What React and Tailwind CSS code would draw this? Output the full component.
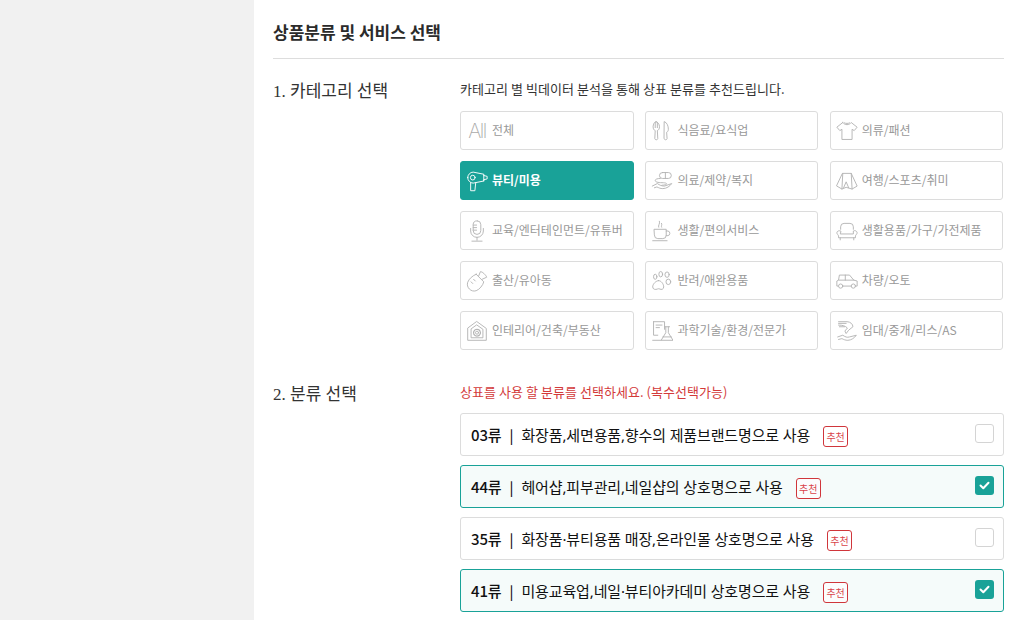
import React from 'react';

const sans = 'font-["Noto_Sans_CJK_KR","Noto_Sans",sans-serif]';

// line icons, 26x26 box
const icons = {
  fork: (
    <>
      <path d="M6 2c-2 0-3.500 3-3.500 6 0 2.500 1 4 2.500 4.500L4.500 22a1.800 1.800 0 0 0 3.500 0L7.500 12.500C9 12 10 10.500 10 8c0-3-2-6-4-6zM5 3v6M7.500 3v6" />
      <path d="M16 2c3 1 4.500 5 4.500 9 0 2-1 3-2 3.500L19 22a1.800 1.800 0 0 1-3.500 0z" />
    </>
  ),
  shirt: <path d="M8 3L1 8.500l3.500 4L7 11v12h12V11l2.500 1.500 3.500-4L18 3c-1 1.500-3 2.500-5 2.500S9 4.500 8 3zM10 3.500c1 .8 5 .8 6 0" />,
  dryer: (
    <>
      <path d="M2 9a6.500 6.500 0 0 1 6.500-6.500L21 5v1.500l4 1v3l-4 1V13L8.500 15.500A6.500 6.500 0 0 1 2 9z" />
      <circle cx="8" cy="9" r="2.800" />
      <path d="M5.500 15v9.500h5l1-9.500M21 6v7" />
    </>
  ),
  pill: (
    <>
      <rect x="10" y="3" width="14" height="7" rx="3.500" />
      <path d="M17 3v7M11 10c-4 0-6 1-6 2.500S8 15 13 15s5.500 1 5.500 1.500-2 1.500-5.500 1.500" />
      <path d="M1.500 19l6-3c3 2 5 3 8.500 3l8.500-3c-2 3-6 6-10.500 6-3 0-5-1-7-2l-3 1" />
    </>
  ),
  tent: (
    <>
      <path d="M8 4h10l7 15-6 3.500-7-2-5 2L1 19z" />
      <path d="M8 4L7 22.500M18 4l1 18.500M9 21l3-7 3 7" />
    </>
  ),
  mic: (
    <>
      <rect x="8.500" y="1" width="9" height="16" rx="4.500" />
      <path d="M5.500 10v3a7.500 7.500 0 0 0 15 0v-3M13 20.500V24M7 25h12M8.500 6h4M8.500 9h4M8.500 12h4" />
    </>
  ),
  cup: (
    <>
      <path d="M4 11h14v7a4 4 0 0 1-4 4H8a4 4 0 0 1-4-4zM18 13h2a2.800 2.800 0 0 1 0 5.500h-2M2 24.500h17" />
      <path d="M9 8.500c-1-2 2-4 1-7M12.500 8.500c-1-1.500 1-2.500 0-4.500" />
    </>
  ),
  sofa: (
    <>
      <path d="M5.500 11V8a4 4 0 0 1 4-4h7a4 4 0 0 1 4 4v3" />
      <path d="M5.500 13a3 3 0 0 0-4.500 2c0 2 2 2.500 2 4v2h20v-2c0-1.500 2-2 2-4a3 3 0 0 0-4.500-2v3.500h-15zM5 21v2.500M21 21v2.500" />
    </>
  ),
  bottle: (
    <>
      <path d="M12 5l9 9c-1 4-5 9-9 10.500-3 1-6 0-8-2s-3-5-2-8c1.500-4 6-8 10-9.500z" />
      <path d="M15 7l2-5c1 0 2.500.5 4 2s3 3 3.500 4.500l-5.500 2.500M9 11l2 2M6 14l2 2" />
    </>
  ),
  paw: (
    <>
      <path d="M9 12.500c3 0 6 4 6 7.500 0 3-3 3.500-4.500 2.500-1-.5-2-.5-3 0C5.500 23.500 2 23 2 20c0-3.500 4-7.500 7-7.500z" />
      <ellipse cx="5" cy="8" rx="2" ry="3" />
      <ellipse cx="11.500" cy="5" rx="2.200" ry="3.200" />
      <ellipse cx="19" cy="5.500" rx="2.500" ry="3.200" />
      <ellipse cx="20.500" cy="14" rx="2.800" ry="3.200" />
    </>
  ),
  car: (
    <>
      <path d="M2.500 19H1v-6l2-1 1-6h12l5 6 4 1v6h-1.500M8 19h10M3.500 12H21M11 6v6" />
      <circle cx="5.500" cy="19" r="2.500" />
      <circle cx="20.500" cy="19" r="2.500" />
    </>
  ),
  house: (
    <>
      <path d="M13 2l11 8v14H2V10z" />
      <path d="M13 6l7 5v10H6V11z" />
      <circle cx="13" cy="15" r="1.800" />
      <circle cx="13" cy="15" r="4" strokeDasharray="2 1" strokeWidth="1.500" />
    </>
  ),
  lab: (
    <>
      <path d="M3 2h13v9M3 2v16h5M6 6h7M6 9h4" />
      <path d="M16 8h6M17.500 8v7L12 24h14l-5.500-9V8M14 20h10M2 24h10" />
    </>
  ),
  hand: (
    <>
      <path d="M3 2h10c4 0 7 3 7 6l-5 4-3 4-1.500-3 3-3.500C11 7 8 6 3 6M3 4h9M4 8h6" />
      <path d="M2 20l6-2c3 2 5 3 8 2l8-2c-2 3-6 6-10 6-3 0-5-1-7-2l-4 1" />
    </>
  ),
};

const categories = [
  { name: '전체', all: true },
  { name: '식음료/요식업', icon: 'fork' },
  { name: '의류/패션', icon: 'shirt' },
  { name: '뷰티/미용', icon: 'dryer', active: true },
  { name: '의료/제약/복지', icon: 'pill' },
  { name: '여행/스포츠/취미', icon: 'tent' },
  { name: '교육/엔터테인먼트/유튜버', icon: 'mic' },
  { name: '생활/편의서비스', icon: 'cup' },
  { name: '생활용품/가구/가전제품', icon: 'sofa' },
  { name: '출산/유아동', icon: 'bottle' },
  { name: '반려/애완용품', icon: 'paw' },
  { name: '차량/오토', icon: 'car' },
  { name: '인테리어/건축/부동산', icon: 'house' },
  { name: '과학기술/환경/전문가', icon: 'lab' },
  { name: '임대/중개/리스/AS', icon: 'hand' },
];

const classes = [
  { code: '03류', text: '화장품,세면용품,향수의 제품브랜드명으로 사용', checked: false },
  { code: '44류', text: '헤어샵,피부관리,네일샵의 상호명으로 사용', checked: true },
  { code: '35류', text: '화장품·뷰티용품 매장,온라인몰 상호명으로 사용', checked: false },
  { code: '41류', text: '미용교육업,네일·뷰티아카데미 상호명으로 사용', checked: true },
];

function CategoryCard({ item }) {
  return (
    <div
      className={
        item.active
          ? 'h-[39px] flex items-center rounded-[3px] bg-[#19a298] border border-[#19a298] text-white font-bold'
          : 'h-[39px] flex items-center rounded-[3px] bg-white border border-[#dcdcdc] text-[#999999]'
      }
    >
      <div className="w-[31px] h-full shrink-0 flex items-center justify-center pl-[1px]">
        {item.all ? (
          <span className='text-[20px] font-["Inter",sans-serif] font-extralight text-[#aaaaaa] tracking-[-1.5px] leading-none'>All</span>
        ) : (
          <svg
            width="22"
            height="22"
            viewBox="0 0 26 26"
            fill="none"
            stroke={item.active ? '#ffffff' : '#b4b4b4'}
            strokeWidth="1.100"
            strokeLinejoin="round"
            strokeLinecap="round"
          >
            {icons[item.icon]}
          </svg>
        )}
      </div>
      <span className="pb-[1px] text-[12px] whitespace-nowrap">{item.name}</span>
    </div>
  );
}

function ClassRow({ item }) {
  return (
    <div
      className={
        item.checked
          ? 'h-[43px] flex items-center pl-[10px] pr-[9px] rounded-[3px] border border-[#19a298] bg-[#f5fbfa]'
          : 'h-[43px] flex items-center pl-[10px] pr-[9px] rounded-[3px] border border-[#dcdcdc] bg-white'
      }
    >
      <span className="pt-[1px] text-[15px] font-medium text-[#111111] tracking-[-0.15px] whitespace-nowrap">{item.code}</span>
      <span className="pt-[1px] text-[14px] font-medium text-[#111111] mx-[8px]">|</span>
      <span className='pt-[1px] font-["Noto_Sans","Noto_Sans_CJK_KR",sans-serif] text-[15px] text-[#111111] tracking-[-0.13px] whitespace-nowrap'>{item.text}</span>
      <span className="ml-[13px] mt-[4px] w-[25px] h-[21px] flex items-center justify-center rounded-[3px] border border-[#d0363b] text-[10px] text-[#d9434a] bg-white/60">
        추천
      </span>
      <span
        className={
          item.checked
            ? 'ml-auto mb-[2px] w-[19px] h-[19px] rounded-[3px] bg-[#19a298] flex items-center justify-center'
            : 'ml-auto mb-[2px] w-[19px] h-[19px] rounded-[3px] bg-white border border-[#d4d4d4]'
        }
      >
        {item.checked && (
          <svg width="11" height="9" viewBox="0 0 11 9" fill="none" stroke="#ffffff" strokeWidth="2" strokeLinecap="round" strokeLinejoin="round">
            <path d="M1.500 4.500l2.800 2.800L9.500 1.800" />
          </svg>
        )}
      </span>
    </div>
  );
}

export default function App() {
  return (
    <div className={`h-[620px] overflow-hidden flex bg-white ${sans}`}>
      {/* Side gutter */}
      <div className="w-[254px] shrink-0 bg-[#f1f1f1]" />

      <div className="flex-1 pl-[19px] pr-[19px]">
        <h2 className="h-[59px] pt-[20px] border-b border-[#dddddd] text-[17px] leading-[24px] font-bold text-[#2b2b2b]">
          상품분류 및 서비스 선택
        </h2>

        <section className="flex pt-[20px]">
          <h3 className='w-[187px] shrink-0 pt-[1px] text-[17px] leading-[24px] text-[#333333] font-["Liberation_Serif","Noto_Sans_CJK_KR",serif]'>
            1. 카테고리 선택
          </h3>
          <div className="w-[543px]">
            <p className="text-[13px] leading-[20px] text-[#333333] tracking-[0.05px]">
              카테고리 별 빅데이터 분석을 통해 상표 분류를 추천드립니다.
            </p>
            <div className="mt-[12px] grid grid-cols-[174px_173px_173px] gap-x-[11.400px] gap-y-[11px]">
              {categories.map((item) => (
                <CategoryCard key={item.name} item={item} />
              ))}
            </div>
          </div>
        </section>

        <section className="flex pt-[31px]">
          <h3 className='w-[187px] shrink-0 pt-[2px] text-[17px] leading-[24px] text-[#333333] font-["Liberation_Serif","Noto_Sans_CJK_KR",serif]'>
            2. 분류 선택
          </h3>
          <div className="w-[544px]">
            <p className="text-[13px] leading-[22px] text-[#d33a3a] tracking-[0.05px]">
              상표를 사용 할 분류를 선택하세요. (복수선택가능)
            </p>
            <div className="mt-[10px] flex flex-col gap-[9px]">
              {classes.map((item) => (
                <ClassRow key={item.code} item={item} />
              ))}
            </div>
          </div>
        </section>
      </div>
    </div>
  );
}
